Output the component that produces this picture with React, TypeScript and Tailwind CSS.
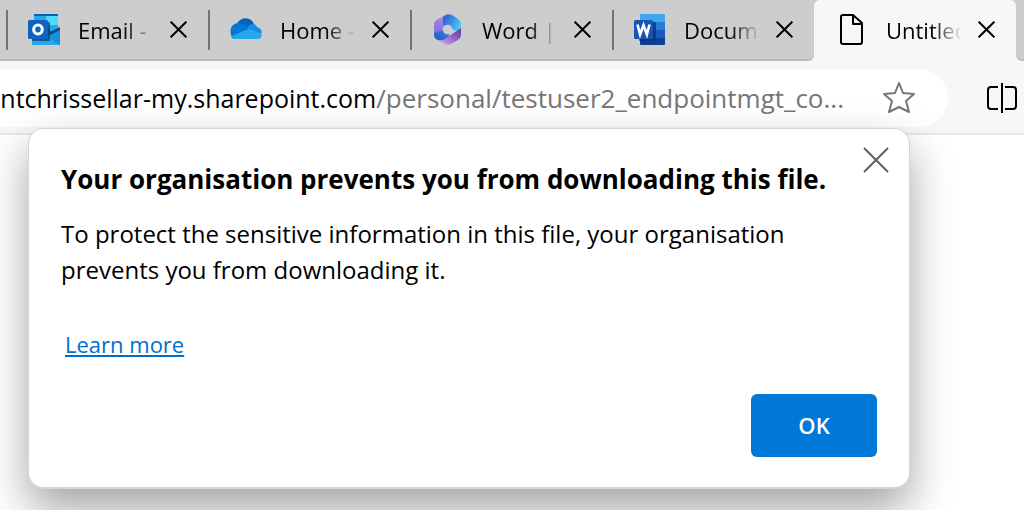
import type { ReactNode } from "react";

function OutlookIcon() {
  return (
    <svg viewBox="0 0 32 32" className="size-8" aria-hidden="true">
      <path d="M6 0h24v4H6z" fill="#0364b8" />
      <path d="M6 2h12v12H6z" fill="#28a8ea" />
      <path d="M18 2h12v12H18z" fill="#50d9ff" />
      <path d="M18 11h12v4l-6 4-6-2z" fill="#28a8ea" />
      <path d="M6 13h14l4 6-6 4H6z" fill="#0a65b5" />
      <path d="M32 14v17H4l28-17z" fill="#1490df" />
      <path d="M4 22v9h28L16 21z" fill="#28a8ea" />
      <path d="M32 13v3L22 21l-2-2z" fill="#0a4a8a" />
      <rect x="4" y="8" width="18" height="19" rx="1" fill="#0a3f73" opacity=".75" />
      <rect x="0" y="6" width="20" height="19" rx="1.5" fill="#0f62bd" />
      <ellipse cx="10" cy="15.5" rx="4.3" ry="4.5" fill="none" stroke="#fff" strokeWidth="3" />
    </svg>
  );
}

function OneDriveIcon() {
  return (
    <svg viewBox="0 0 32 32" className="size-8" aria-hidden="true">
      <path d="M7 10C10 3 20 2 24 10l-4 8z" fill="#0364b8" />
      <path d="M1 21C-1 13 4 9 8 9c4 0 6 2 9 4l5 3-17 9c-2 0-4-2-4-4z" fill="#0078d4" />
      <path d="M17 14c3-5 8-5 10-1 3 1 5 3 5 6l-8 1z" fill="#1490df" />
      <path d="M2 22l14-6c2-1 4-1 6 0l10 4c0 3-2 5-4 5H6c-2 0-3-1-4-3z" fill="#28a8ea" />
    </svg>
  );
}

function Microsoft365Icon() {
  return (
    <svg viewBox="0 0 32 32" className="size-8" aria-hidden="true">
      <defs>
        <linearGradient id="m365-a" x1="0.5" y1="0" x2="0.3" y2="1">
          <stop offset="0" stopColor="#a88be8" />
          <stop offset="1" stopColor="#7d6fd8" />
        </linearGradient>
        <linearGradient id="m365-b" x1="0" y1="0.2" x2="1" y2="0.8">
          <stop offset="0" stopColor="#2b5fd0" />
          <stop offset="0.5" stopColor="#3f97ea" />
          <stop offset="1" stopColor="#4fdcff" />
        </linearGradient>
        <linearGradient id="m365-c" x1="1" y1="0" x2="0.1" y2="0.9">
          <stop offset="0" stopColor="#5f3f98" />
          <stop offset="0.5" stopColor="#9064c4" />
          <stop offset="1" stopColor="#cf9af6" />
        </linearGradient>
        <linearGradient id="m365-d" x1="0" y1="1" x2="1" y2="0">
          <stop offset="0" stopColor="#1c54b8" />
          <stop offset="1" stopColor="#3f8ae6" />
        </linearGradient>
      </defs>
      <path d="M16 0L6 5Q2 7 2 11v11l10-4 4-9z" fill="url(#m365-a)" />
      <path d="M2 19v2q0 4 4 5l3 1q4 0 7-3l2-6-7-2z" fill="url(#m365-d)" />
      <path d="M11 3q4-4 9-2l6 4q3 2 3 6v9l-7-4-11-5z" fill="url(#m365-b)" />
      <path d="M29 14v7q0 3-3 5l-7 4q-3 1-6 0l-7-4q5 1 8-2l6-4z" fill="url(#m365-c)" />
      <circle cx="15.5" cy="15.5" r="4.8" fill="#cdcdcd" />
    </svg>
  );
}

function WordIcon() {
  return (
    <svg viewBox="0 0 32 32" className="size-8" aria-hidden="true">
      <path d="M6 0h24q1 0 1 1v7H6z" fill="#41a5ee" />
      <path d="M6 8h25v8H6z" fill="#2b7cd3" />
      <path d="M6 16h25v8H6z" fill="#185abd" />
      <path d="M6 24h25v6q0 1-1 1H7q-1 0-1-1z" fill="#103f91" />
      <rect x="5" y="8" width="17" height="19" rx="1" fill="#0d337a" opacity=".8" />
      <rect x="0" y="6" width="19" height="19" rx="1.5" fill="#1754b8" />
      <path d="M3.5 10.5l2.6 10 3.4-9.5 3.4 9.5 2.6-10" fill="none" stroke="#fff" strokeWidth="2.6" />
    </svg>
  );
}

function PageIcon() {
  return (
    <svg viewBox="0 0 32 32" className="size-8" fill="none" stroke="#000" strokeWidth="2" strokeLinejoin="round" aria-hidden="true">
      <path d="M7 1h10l9 8v19q0 2-2 2H7q-2 0-2-2V3q0-2 2-2z" />
      <path d="M17 1v9h9" />
    </svg>
  );
}

function Cross({ className, weight }: { className: string; weight: number }) {
  return (
    <svg viewBox="0 0 26 26" className={className} fill="none" aria-hidden="true">
      <path d="M1 1l24 24M25 1L1 25" stroke="currentColor" strokeWidth={weight} />
    </svg>
  );
}

type TabInfo = { title: string; icon: ReactNode; active?: boolean; last?: boolean };

const tabs: TabInfo[] = [
  { title: "Email -", icon: <OutlookIcon /> },
  { title: "Home -", icon: <OneDriveIcon /> },
  { title: "Word |", icon: <Microsoft365Icon /> },
  { title: "Docum", icon: <WordIcon />, last: true },
  { title: "Untitled", icon: <PageIcon />, active: true },
];

function Tab({ title, icon, active, last }: TabInfo) {
  const shell = active
    ? "bg-[#cdcdcd]"
    : last
      ? "rounded-br-md border-b-2 border-[#bdbdbd] bg-[#cdcdcd]"
      : "border-b-2 border-[#bdbdbd] bg-[#cdcdcd]";
  const body = active ? "rounded-t-md bg-[#f7f7f7] h-full pb-0.5" : "h-full";
  return (
    <div className={`w-[202px] shrink-0 ${shell}`}>
      <div className={`flex items-center ${body}`}>
        <span className={active ? "h-10 w-0.5" : "h-10 w-0.5 bg-[#737373]"} />
        <button type="button" className="ml-5 flex items-center gap-[18px]">
          {icon}
          <span className="w-[76px] overflow-hidden text-left text-[22px] leading-8 whitespace-nowrap text-black [mask-image:linear-gradient(to_right,black_60%,transparent)]">
            {title}
          </span>
        </button>
        <button type="button" aria-label={`Close ${title}`} className="ml-4 text-black">
          <Cross className="size-[17px]" weight={3} />
        </button>
      </div>
    </div>
  );
}

export default function App() {
  return (
    <div className="relative min-h-screen overflow-hidden bg-white font-['Open_Sans','Noto_Sans',sans-serif]">
      <nav className="flex h-[61px] overflow-hidden bg-[#f7f7f7]">
        <div className="w-1.5 shrink-0 border-b-2 border-[#bdbdbd] bg-[#cdcdcd]" />
        {tabs.map((tab) => (
          <Tab key={tab.title} {...tab} />
        ))}
        <div className="flex-1 rounded-bl-md border-b-2 border-[#bdbdbd] bg-[#cdcdcd]" />
      </nav>

      <header className="flex items-center border-b-2 border-[#e9e9e9] bg-[#f7f7f7] pt-2 pr-1.5 pb-1.5">
        <div className="flex h-[58px] min-w-0 flex-1 items-center justify-end rounded-r-full bg-white pr-8">
          <p className="flex min-w-0 flex-1 items-baseline justify-end overflow-hidden leading-9 whitespace-nowrap text-black">
            <span className="text-[25px]">ntchrissellar-my.sharepoint.com</span>
            <span className="text-[26px] text-[#767676]">/personal/testuser2_endpointmgt_co...</span>
          </p>
          <button type="button" aria-label="Add to favourites" className="ml-[38px]">
            <svg viewBox="0 0 34 34" className="size-[34px]" fill="none" stroke="#767676" strokeWidth="2" strokeLinejoin="round" aria-hidden="true">
              <path d="M17 2l4 10 11 1-8 7 3 11-10-5-10 5 3-11-8-7 11-1z" />
            </svg>
          </button>
        </div>
        <button type="button" aria-label="Split screen" className="ml-[38px]">
          <svg viewBox="0 0 32 32" className="size-8" fill="none" stroke="#000" strokeWidth="2" aria-hidden="true">
            <path d="M12 5H5Q2 5 2 8v16q0 3 3 3h7M19 5h8q3 0 3 3v16q0 3-3 3h-8M16 1v30" />
          </svg>
        </button>
      </header>

      <section
        role="dialog"
        aria-labelledby="dialog-title"
        className="absolute top-32 left-7 flex w-[882px] flex-col rounded-2xl border border-b-2 border-[#d6d6d6] bg-white px-8 pt-4 pb-[30px] shadow-[0_20px_44px_rgba(0,0,0,0.36)]"
      >
        <button type="button" aria-label="Close dialog" className="-mr-3.5 self-end p-0.5 text-[#5f5f5f]">
          <Cross className="size-[26px]" weight={2} />
        </button>
        <h1 id="dialog-title" className="-mt-3 text-[26px] leading-8 font-bold text-black">
          Your organisation prevents you from downloading this file.
        </h1>
        <p className="mt-[21px] max-w-[760px] text-2xl leading-9 text-black">
          To protect the sensitive information in this file, your organisation prevents you from downloading it.
        </p>
        <a href="#learn-more" className="mt-10 ml-1 self-start text-[22px] leading-8 font-medium text-[#0070cc] underline decoration-2 underline-offset-2">
          Learn more
        </a>
        <button type="button" className="mt-[34px] h-[63px] w-[126px] self-end rounded-md bg-[#0078d7] text-[22px] font-semibold text-white">
          OK
        </button>
      </section>
    </div>
  );
}
